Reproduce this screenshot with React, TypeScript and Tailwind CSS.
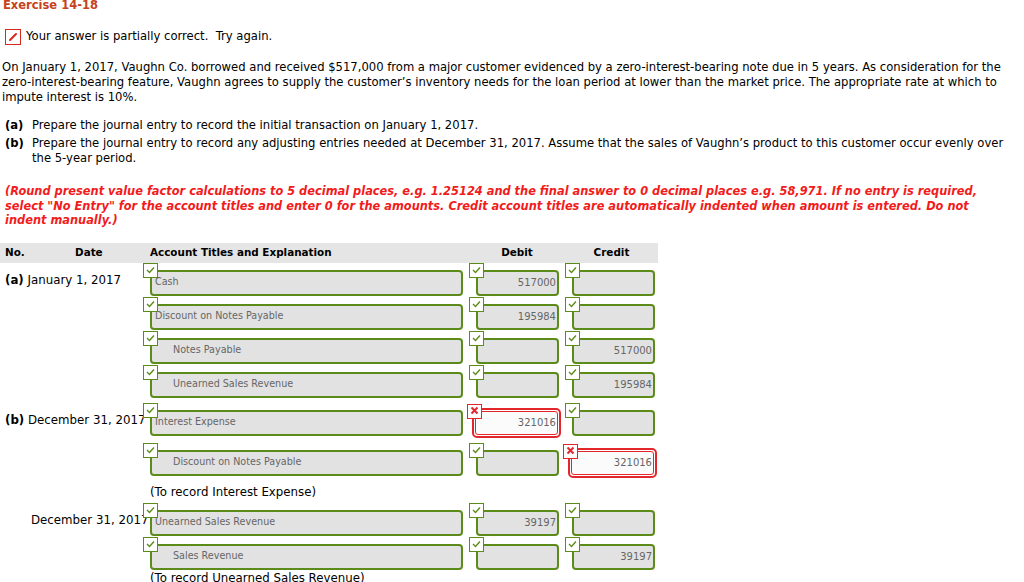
import React from "react";

const GREEN = "border-[#5b8c1a]";

function CheckBadge() {
  return (
    <div className="absolute left-0 top-0 z-10 flex h-[15px] w-[15px] items-start justify-center border border-[#5b8c1a] bg-white">
      <svg width="13" height="13" viewBox="0 0 13 13">
        <polyline points="3,6 5.5,8.5 10,3.5" fill="none" stroke="#5b8c1a" strokeWidth="1.4" />
      </svg>
    </div>
  );
}

function CrossBadge() {
  return (
    <div className="absolute left-[-2px] top-[1px] z-10 flex h-[15px] w-[15px] items-start justify-center border border-[#e3262b] bg-white">
      <svg width="13" height="13" viewBox="0 0 13 13">
        <path d="M3.5 2.5 L9.5 8.5 M9.5 2.5 L3.5 8.5" stroke="#e3262b" strokeWidth="2" />
      </svg>
    </div>
  );
}

type FieldProps = {
  width: number;
  text?: string;
  indent?: boolean;
  right?: boolean;
  wrong?: boolean;
};

function Field({ width, text, indent, right, wrong }: FieldProps) {
  if (wrong) {
    return (
      <div className="relative pl-[3px] pt-[5px]">
        <CrossBadge />
        <div
          className="h-[30px] rounded-[5px] border-2 border-[#e3262b] bg-white p-[1px]"
          style={{ width: width + 6 }}
        >
          <div className="flex h-full items-center justify-end rounded-[3px] border border-[#e3262b] bg-[#fbfbfb] pr-[1px] text-[10px] text-[#666]">
            {text}
          </div>
        </div>
      </div>
    );
  }
  return (
    <div className="relative pl-[7px] pt-[7px]">
      <CheckBadge />
      <div
        className={`flex h-[26px] items-center rounded-[4px] border-2 ${GREEN} bg-[#e2e2e2] text-[#666] ${
          right ? "justify-end pr-[1px] text-[10px]" : indent ? "pl-[21px] text-[9.6px]" : "pl-[3px] text-[9.6px]"
        }`}
        style={{ width }}
      >
        {text}
      </div>
    </div>
  );
}

type RowProps = {
  h: number;
  date?: React.ReactNode;
  account: string;
  indent?: boolean;
  debit?: string;
  credit?: string;
  debitWrong?: boolean;
  creditWrong?: boolean;
};

function Row({ h, date, account, indent, debit, credit, debitWrong, creditWrong }: RowProps) {
  return (
    <div className="grid grid-cols-[143px_326px_96px_93px]" style={{ height: h }}>
      <div className="whitespace-nowrap pl-[5px] pt-[10px] text-[11.8px] leading-[15px]">{date}</div>
      <Field width={313} text={account} indent={indent} />
      <Field width={83} text={debit} right wrong={debitWrong} />
      <Field width={83} text={credit} right wrong={creditWrong} />
    </div>
  );
}

export default function App() {
  return (
    <div
      className="min-h-screen w-full overflow-hidden bg-white text-[11.6px] text-black"
      style={{ fontFamily: '"DejaVu Sans", Verdana, sans-serif' }}
    >
      <div className="-mt-[2px] pl-[3px] text-[11.5px] font-bold leading-[14px] text-[#c5431c]">Exercise 14-18</div>

      <div className="mt-[17px] flex h-[16px] items-center pl-[5px]">
        <div className="flex h-[16px] w-[16px] items-center justify-center border-[1.5px] border-[#d9281e] bg-white">
          <svg width="12" height="12" viewBox="0 0 12 12">
            <path d="M3 9 L9 3" stroke="#d9281e" strokeWidth="2" strokeLinecap="round" />
          </svg>
        </div>
        <span className="ml-[5px]">Your answer is partially correct.&nbsp; Try again.</span>
      </div>

      <p className="mt-[15px] pl-[2px] leading-[15px]">
        On January 1, 2017, Vaughn Co. borrowed and received $517,000 from a major customer evidenced by a zero-interest-bearing note due in 5 years. As consideration for the
        <br />
        zero-interest-bearing feature, Vaughn agrees to supply the customer’s inventory needs for the loan period at lower than the market price. The appropriate rate at which to
        <br />
        impute interest is 10%.
      </p>

      <div className="mt-[13px] flex pl-[5px] leading-[15px]">
        <span className="w-[27px] shrink-0 font-bold">(a)</span>
        <span>Prepare the journal entry to record the initial transaction on January 1, 2017.</span>
      </div>
      <div className="mt-[3px] flex pl-[5px] leading-[15px]">
        <span className="w-[27px] shrink-0 font-bold">(b)</span>
        <span>
          Prepare the journal entry to record any adjusting entries needed at December 31, 2017. Assume that the sales of Vaughn’s product to this customer occur evenly over
          <br />
          the 5-year period.
        </span>
      </div>

      <p className="mt-[18px] pl-[5px] text-[11.4px] font-bold italic leading-[14.5px] text-[#f21b1b]">
        (Round present value factor calculations to 5 decimal places, e.g. 1.25124 and the final answer to 0 decimal places e.g. 58,971. If no entry is required,
        <br />
        select "No Entry" for the account titles and enter 0 for the amounts. Credit account titles are automatically indented when amount is entered. Do not
        <br />
        indent manually.)
      </p>

      <div className="mt-[15px] flex h-[20px] w-[658px] items-center bg-[#e5e5e5] text-[10.4px] font-bold">
        <div className="w-[70px] pl-[5px]">No.</div>
        <div className="w-[73px] pl-[5px]">Date</div>
        <div className="w-[326px] pl-[7px]">Account Titles and Explanation</div>
        <div className="w-[96px] text-center">Debit</div>
        <div className="w-[93px] text-center">Credit</div>
      </div>

      <Row
        h={34}
        date={
          <>
            <span className="font-bold">(a)</span> January 1, 2017
          </>
        }
        account="Cash"
        debit="517000"
      />
      <Row h={34} account="Discount on Notes Payable" debit="195984" />
      <Row h={34} account="Notes Payable" indent credit="517000" />
      <Row h={38} account="Unearned Sales Revenue" indent credit="195984" />
      <Row
        h={40}
        date={
          <>
            <span className="font-bold">(b)</span> December 31, 2017
          </>
        }
        account="Interest Expense"
        debit="321016"
        debitWrong
      />
      <Row h={41} account="Discount on Notes Payable" indent credit="321016" creditWrong />
      <div className="h-[19px] pl-[150px] pt-[1px] text-[11.8px] leading-[15px]">(To record Interest Expense)</div>
      <Row
        h={34}
        date={<span className="pl-[26px]">December 31, 2017</span>}
        account="Unearned Sales Revenue"
        debit="39197"
      />
      <Row h={34} account="Sales Revenue" indent credit="39197" />
      <div className="pl-[150px] text-[11.8px] leading-[15px]">(To record Unearned Sales Revenue)</div>
    </div>
  );
}
